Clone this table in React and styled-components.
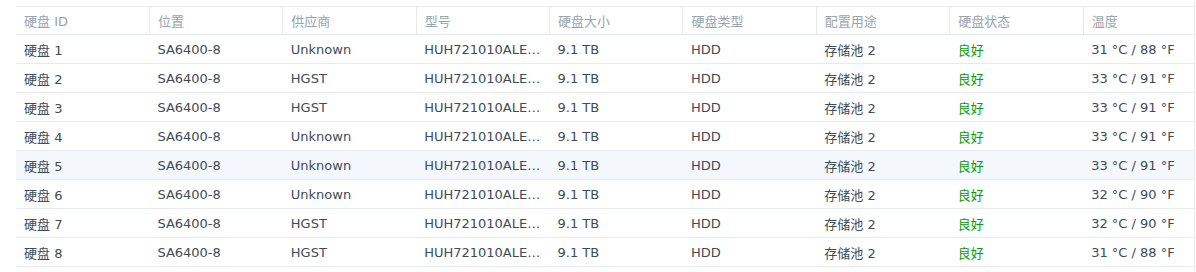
import styled, { createGlobalStyle } from 'styled-components';

const GlobalStyle = createGlobalStyle`
  html, body {
    margin: 0;
    padding: 0;
    background: #ffffff;
  }
  body {
    font-family: "DejaVu Sans", "Noto Sans CJK SC", sans-serif;
  }
`;

const Panel = styled.div`
  width: 1195px;
  height: 272px;
  box-sizing: border-box;
  padding: 6px 0 0 16px;
  border-right: 1px solid #e6eaef;
  overflow: hidden;
`;

const Table = styled.table`
  width: 100%;
  table-layout: fixed;
  border-collapse: collapse;
  font-size: 13px;
`;

const Col = styled.col`
  width: ${(p) => (p.$last ? 'auto' : '133.4px')};
`;

const HeadCell = styled.th`
  height: 27px;
  padding: 0 8px;
  text-align: left;
  font-weight: normal;
  color: #9aa3ad;
  border-top: 1px solid #e6eaef;
  border-bottom: 1px solid #e3e8ee;
  border-left: ${(p) => (p.$first ? 'none' : '1px solid #e3e8ee')};
  white-space: nowrap;
  overflow: hidden;
`;

const Row = styled.tr`
  background: ${(p) => (p.$hover ? '#f4f8fc' : 'transparent')};
`;

const Cell = styled.td`
  height: 28px;
  padding: 0 8px;
  color: ${(p) => (p.$good ? '#0a9c0a' : '#414b55')};
  border-bottom: 1px solid #e6eaef;
  white-space: nowrap;
  overflow: hidden;
  text-overflow: ellipsis;
`;

const columns = ['硬盘 ID', '位置', '供应商', '型号', '硬盘大小', '硬盘类型', '配置用途', '硬盘状态', '温度'];

const disks = [
  { vendor: 'Unknown', c: 31, f: 88 },
  { vendor: 'HGST', c: 33, f: 91 },
  { vendor: 'HGST', c: 33, f: 91 },
  { vendor: 'Unknown', c: 33, f: 91 },
  { vendor: 'Unknown', c: 33, f: 91 },
  { vendor: 'Unknown', c: 32, f: 90 },
  { vendor: 'HGST', c: 32, f: 90 },
  { vendor: 'HGST', c: 31, f: 88 },
];

function App() {
  return (
    <>
      <GlobalStyle />
      <Panel>
        <Table>
          <colgroup>
            {columns.map((col, i) => (
              <Col key={col} $last={i === columns.length - 1} />
            ))}
          </colgroup>
          <thead>
            <tr>
              {columns.map((col, i) => (
                <HeadCell key={col} $first={i === 0}>
                  {col}
                </HeadCell>
              ))}
            </tr>
          </thead>
          <tbody>
            {disks.map((d, i) => (
              <Row key={i} $hover={i === 4}>
                <Cell>硬盘 {i + 1}</Cell>
                <Cell>SA6400-8</Cell>
                <Cell>{d.vendor}</Cell>
                <Cell>HUH721010ALE600</Cell>
                <Cell>9.1 TB</Cell>
                <Cell>HDD</Cell>
                <Cell>存储池 2</Cell>
                <Cell $good>良好</Cell>
                <Cell>
                  {d.c} °C / {d.f} °F
                </Cell>
              </Row>
            ))}
          </tbody>
        </Table>
      </Panel>
    </>
  );
}

export default App;
